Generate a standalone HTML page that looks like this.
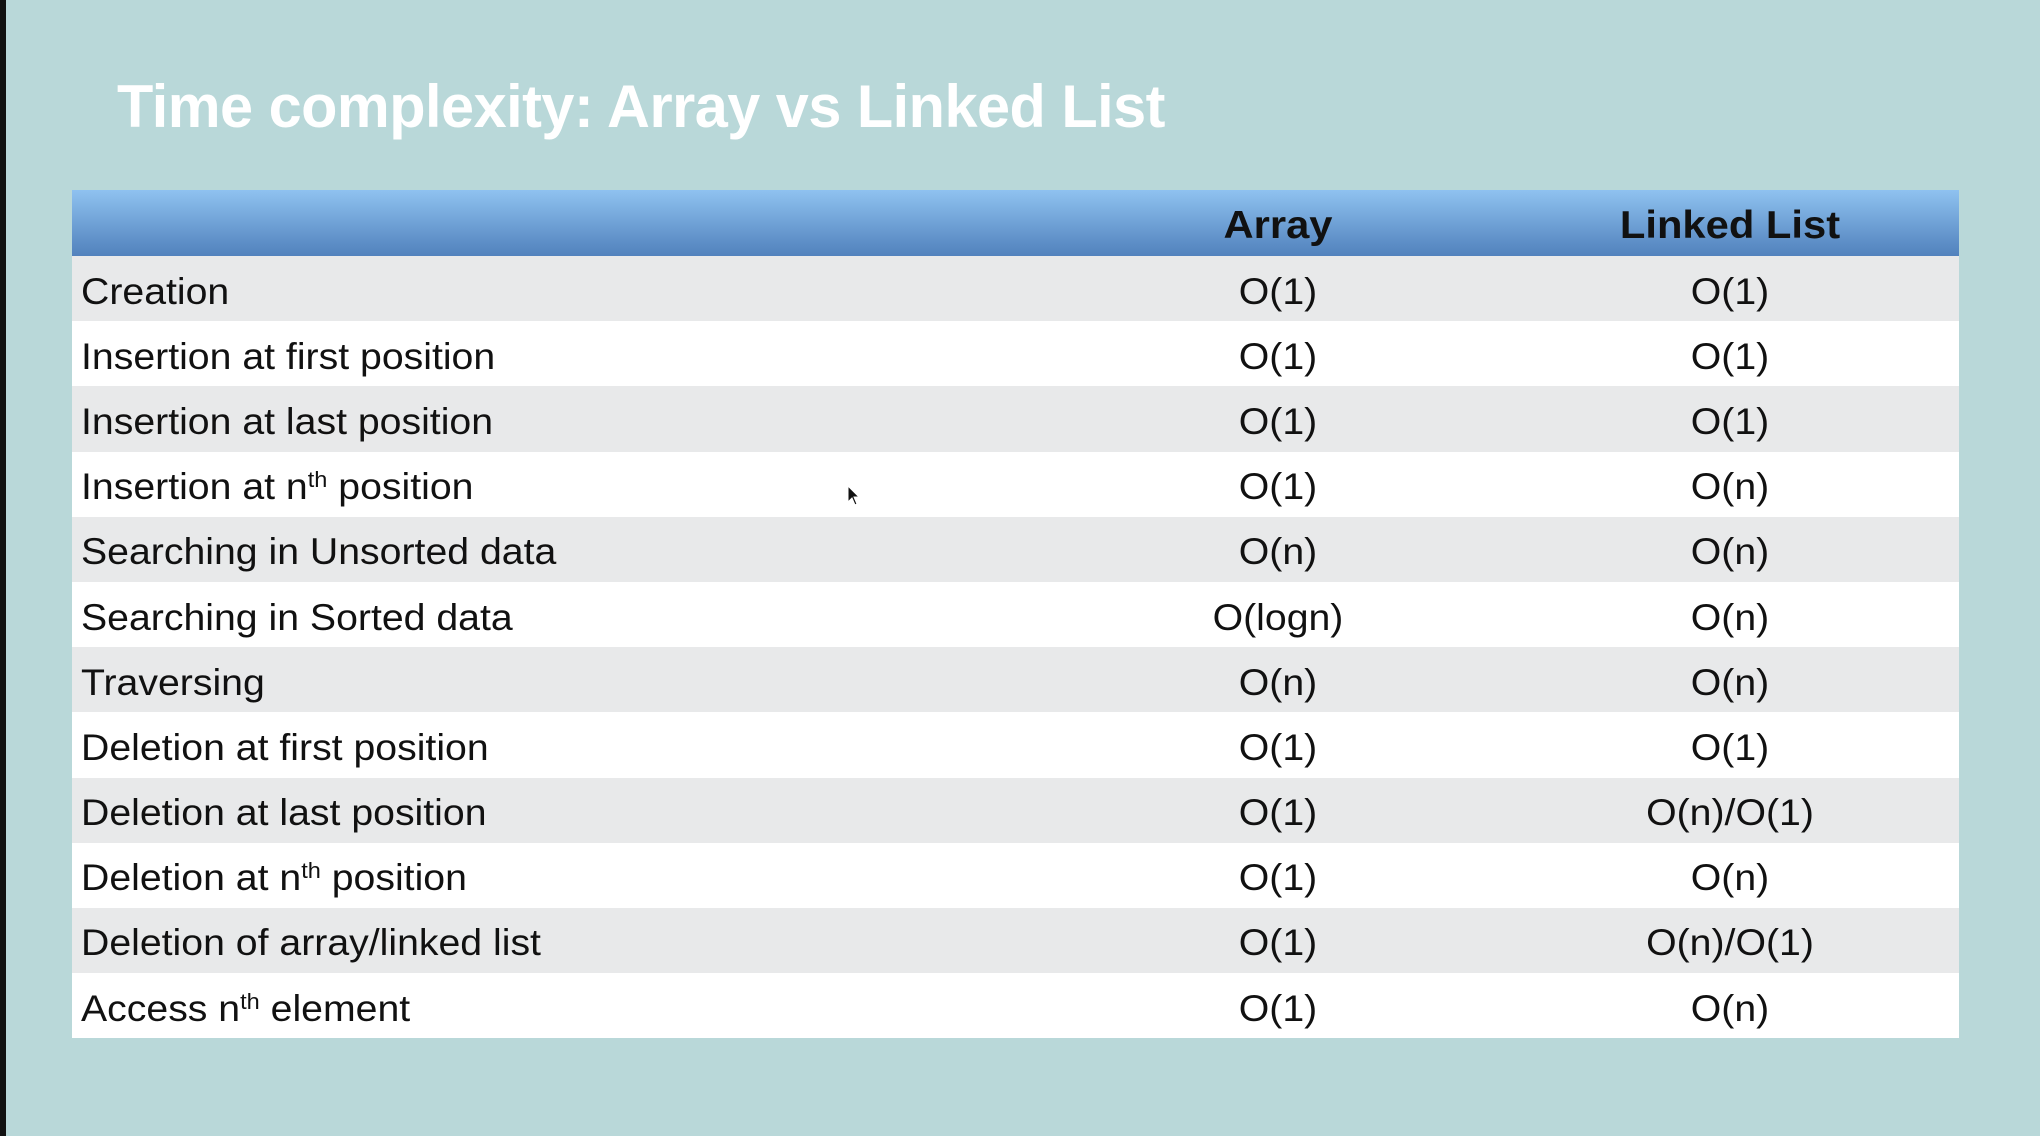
<!DOCTYPE html>
<html><head><meta charset="utf-8"><style>
html,body{margin:0;padding:0}
body{width:2040px;height:1136px;background:#b9d8d9;position:relative;overflow:hidden;font-family:"Liberation Sans",Arial,sans-serif}
.lb{position:absolute;left:0;top:0;width:6px;height:1136px;background:#111}
.title{position:absolute;left:117px;top:72px;font-size:60px;font-weight:bold;color:#fff;white-space:nowrap;transform:scaleX(0.99);transform-origin:left top;letter-spacing:-0.5px}
.tbl{position:absolute;left:72px;top:190px;width:1887px}
.hd{height:66px;background:linear-gradient(#8fc2f0,#5a8bc4 85%,#5282bd);position:relative;font-weight:bold}
.row{height:65.2px;position:relative;font-size:37px;color:#111}
.row:nth-child(odd){background:#e8e9ea}
.row:nth-child(even){background:#fff}
.c{position:absolute;top:calc(50% + 3px);transform:translateY(-50%) scaleX(1.06);white-space:nowrap}
.l{left:9px;transform-origin:left center}
.a,.b{width:400px;text-align:center}
.a{left:1006px}.b{left:1458px}
.hd .c{font-size:39px;color:#111;top:55%;transform:translateY(-50%) scaleX(1.07)}
sup{font-size:0.6em;vertical-align:0.55em;line-height:0}
</style></head><body>
<div class="lb"></div>
<div class="title">Time complexity: Array vs Linked List</div>
<div class="tbl">
<div class="hd"><span class="c a">Array</span><span class="c b">Linked List</span></div>
<div>
<div class="row"><span class="c l">Creation</span><span class="c a">O(1)</span><span class="c b">O(1)</span></div>
<div class="row"><span class="c l">Insertion at first position</span><span class="c a">O(1)</span><span class="c b">O(1)</span></div>
<div class="row"><span class="c l">Insertion at last position</span><span class="c a">O(1)</span><span class="c b">O(1)</span></div>
<div class="row"><span class="c l">Insertion at n<sup>th</sup> position</span><span class="c a">O(1)</span><span class="c b">O(n)</span></div>
<div class="row"><span class="c l">Searching in Unsorted data</span><span class="c a">O(n)</span><span class="c b">O(n)</span></div>
<div class="row"><span class="c l">Searching in Sorted data</span><span class="c a">O(logn)</span><span class="c b">O(n)</span></div>
<div class="row"><span class="c l">Traversing</span><span class="c a">O(n)</span><span class="c b">O(n)</span></div>
<div class="row"><span class="c l">Deletion at first position</span><span class="c a">O(1)</span><span class="c b">O(1)</span></div>
<div class="row"><span class="c l">Deletion at last position</span><span class="c a">O(1)</span><span class="c b">O(n)/O(1)</span></div>
<div class="row"><span class="c l">Deletion at n<sup>th</sup> position</span><span class="c a">O(1)</span><span class="c b">O(n)</span></div>
<div class="row"><span class="c l">Deletion of array/linked list</span><span class="c a">O(1)</span><span class="c b">O(n)/O(1)</span></div>
<div class="row"><span class="c l">Access n<sup>th</sup> element</span><span class="c a">O(1)</span><span class="c b">O(n)</span></div>
</div>
</div>
<svg style="position:absolute;left:847px;top:485px" width="14" height="22" viewBox="0 0 14 22"><path d="M1 1 L1 17 L5 13 L8 20 L10 19 L7 12 L12 12 Z" fill="#111" stroke="#fff" stroke-width="1"/></svg>
</body></html>
